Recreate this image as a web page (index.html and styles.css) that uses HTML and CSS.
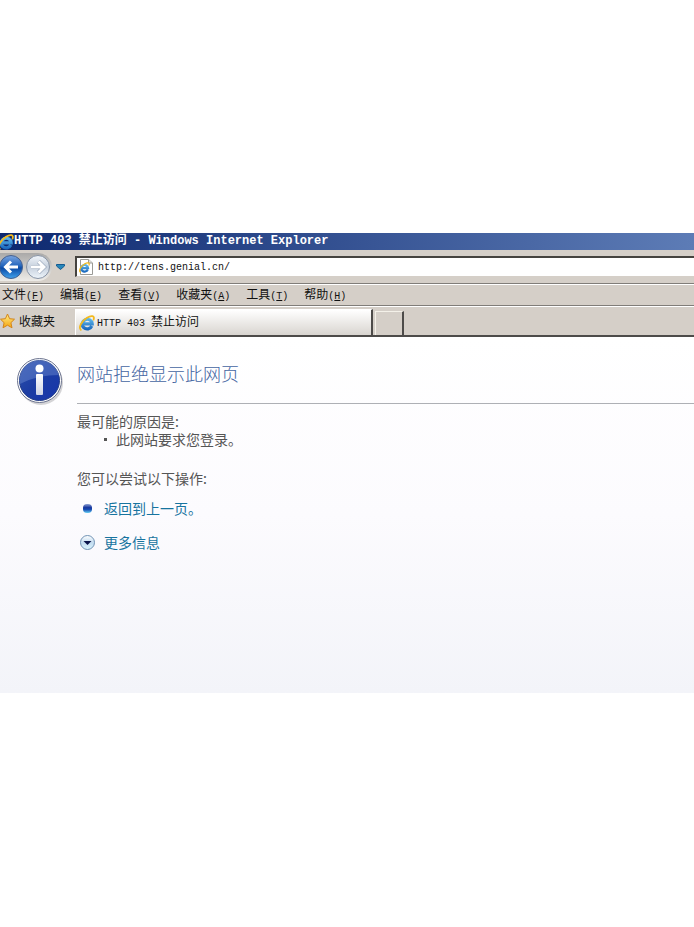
FILE: index.html
```html
<!DOCTYPE html>
<html lang="zh-CN">
<head>
<meta charset="utf-8">
<title>HTTP 403 禁止访问</title>
<link rel="stylesheet" href="styles.css">
</head>
<body>
<svg class="defs" width="0" height="0" aria-hidden="true">
  <defs>
    <linearGradient id="blue" x1="0" y1="0" x2="0" y2="1"><stop offset="0" stop-color="#7ba5e0"/><stop offset=".45" stop-color="#2466bd"/><stop offset=".55" stop-color="#0b4aa5"/><stop offset="1" stop-color="#42a4ee"/></linearGradient>
    <linearGradient id="silver" x1="0" y1="0" x2="0" y2="1"><stop offset="0" stop-color="#f2f6fb"/><stop offset=".5" stop-color="#c6d0dd"/><stop offset="1" stop-color="#eef5fb"/></linearGradient>
    <linearGradient id="info" x1="0" y1="0" x2="1" y2="1"><stop offset="0" stop-color="#2c50ac"/><stop offset=".5" stop-color="#1c3da3"/><stop offset="1" stop-color="#1735ad"/></linearGradient>
    <linearGradient id="stem" x1="0" y1="0" x2="0" y2="1"><stop offset="0" stop-color="#fff"/><stop offset="1" stop-color="#cfd5e6"/></linearGradient>
    <linearGradient id="gold" x1="0" y1="0" x2="0" y2="1"><stop offset="0" stop-color="#ffef8a"/><stop offset="1" stop-color="#f5a40c"/></linearGradient>
    <linearGradient id="cyan" gradientUnits="userSpaceOnUse" x1="0" y1="2" x2="0" y2="15"><stop offset="0" stop-color="#6ac4f2"/><stop offset="1" stop-color="#1765bb"/></linearGradient>
    <linearGradient id="dot" x1="0" y1="0" x2="0" y2="1"><stop offset="0" stop-color="#8d9fd0"/><stop offset=".4" stop-color="#17379f"/><stop offset=".6" stop-color="#1648b0"/><stop offset="1" stop-color="#67d0f4"/></linearGradient>
    <linearGradient id="pale" x1="0" y1="0" x2="0" y2="1"><stop offset="0" stop-color="#fff"/><stop offset=".5" stop-color="#c3dcf0"/><stop offset="1" stop-color="#d9f4fd"/></linearGradient>
    <symbol id="ie" viewBox="0 0 16 16">
      <path d="M12.800 11A5 4.800 0 1 1 13.200 8.800H4.600" fill="none" stroke="url(#cyan)" stroke-width="3.200"/>
      <path d="M1.800 14.800C-.6 12.500 2.400 6.200 8 2.800C12 .4 16 .4 14.600 4.600" fill="none" stroke="#f3b91d" stroke-width="1.800" stroke-linecap="round"/>
    </symbol>
  </defs>
</svg>
<main class="window">
  <header class="titlebar">
    <svg class="title-icon" viewBox="2 0 14 16" aria-hidden="true"><use href="#ie" width="16" height="16"/></svg>
    <h1>HTTP 403 禁止访问 - Windows Internet Explorer</h1>
  </header>

  <div class="navbar">
    <div class="travel">
      <button type="button" aria-label="后退"><svg width="24" height="26" viewBox="0 0 24 26"><circle cx="11" cy="13" r="11.500" fill="url(#blue)" stroke="#46618f"/><path d="M18 13H6M11 7.500L5.500 13L11 18.500" fill="none" stroke="#fff" stroke-width="3"/></svg></button>
      <button type="button" aria-label="前进"><svg width="28" height="26" viewBox="0 0 28 26"><circle cx="14" cy="13" r="11.500" fill="url(#silver)" stroke="#8793a5"/><path d="M7 13H19M14.500 7.500L20 13L14.500 18.500" fill="none" stroke="#8b9bb0" stroke-width="4"/><path d="M7 13H19M14.500 7.500L20 13L14.500 18.500" fill="none" stroke="#fff" stroke-width="3"/></svg></button>
    </div>
    <button type="button" class="recent" aria-label="最近的页面"><svg width="9" height="6" viewBox="0 0 9 6"><path d="M.5.5H8.500V2L4.500 5.500L.5 2Z" fill="#2787ba" stroke="#155b91"/></svg></button>
    <label class="address">
      <svg width="14" height="16" viewBox="0 0 14 16" aria-hidden="true"><path d="M1.500.5H9.500L13.500 4V15.500H1.500Z" fill="#fff" stroke="#9a9a96"/><path d="M9.500.5V4H13.500" fill="#e4e4e0" stroke="#9a9a96"/><use href="#ie" x="0" y="3" width="11" height="11"/></svg>
      <input type="text" aria-label="地址" value="http://tens.genial.cn/">
    </label>
  </div>

  <nav class="menubar" aria-label="菜单">
    <button type="button">文件<span class="latin">(<u>F</u>)</span></button>
    <button type="button">编辑<span class="latin">(<u>E</u>)</span></button>
    <button type="button">查看<span class="latin">(<u>V</u>)</span></button>
    <button type="button">收藏夹<span class="latin">(<u>A</u>)</span></button>
    <button type="button">工具<span class="latin">(<u>T</u>)</span></button>
    <button type="button">帮助<span class="latin">(<u>H</u>)</span></button>
  </nav>

  <div class="tabbar">
    <button type="button" class="favorites"><svg width="15" height="16" viewBox="0 0 15 16" aria-hidden="true"><path d="M7.500 1L9.600 5.700L14.500 6.200L10.900 9.700L12 14.800L7.500 12.200L3 14.800L4.100 9.700L.5 6.200L5.400 5.700Z" fill="url(#gold)" stroke="#d4851a"/></svg>收藏夹</button>
    <button type="button" class="tab"><svg width="16" height="16" viewBox="0 0 16 16" aria-hidden="true"><use href="#ie"/></svg><span><span class="latin">HTTP 403 </span>禁止访问</span></button>
    <button type="button" class="new-tab" aria-label="新选项卡"></button>
  </div>

  <article class="page">
    <svg class="info" width="48" height="49" viewBox="0 0 48 49" aria-hidden="true">
      <circle cx="25" cy="26" r="22" fill="#a9aaae" opacity=".5"/>
      <circle cx="23.500" cy="23.500" r="22" fill="#fff" stroke="#6d7590"/>
      <circle cx="23.500" cy="23.500" r="20" fill="url(#info)" stroke="#243e88"/>
      <path d="M4 27A20 20 0 0 1 43 18C30 18 15 21 4 27Z" fill="#86a3df" opacity=".35"/>
      <circle cx="23.500" cy="11.500" r="4" fill="#fff"/>
      <rect x="20" y="17" width="7" height="21" rx="1" fill="url(#stem)"/>
    </svg>
    <div class="content">
      <h2>网站拒绝显示此网页</h2>
      <section class="reasons">
        <p>最可能的原因是:</p>
        <ul><li>此网站要求您登录。</li></ul>
      </section>
      <p class="try">您可以尝试以下操作:</p>
      <div class="action"><svg width="20" height="16" viewBox="0 0 20 16" aria-hidden="true"><rect x="6" y="4" width="9" height="9" rx="4" fill="url(#dot)"/></svg><a href="#back">返回到上一页。</a></div>
      <div class="action"><svg width="20" height="16" viewBox="0 0 20 16" aria-hidden="true"><circle cx="10.500" cy="8.500" r="7" fill="url(#pale)" stroke="#7193b5"/><path d="M6.500 7H14.500L10.500 11Z" fill="#08144b"/></svg><a href="#more">更多信息</a></div>
    </div>
  </article>
</main>
</body>
</html>
```
FILE: styles.css
```css
* { box-sizing: border-box; }
body {
  margin: 0;
  min-height: 100vh;
  padding-bottom: 1px;
  display: flex;
  flex-direction: column;
  justify-content: center;
  background: #fff;
  color: #111;
  font: 12px/18px "Noto Sans CJK SC", sans-serif;
}
h1, h2, p, ul { margin: 0; padding: 0; }
button {
  padding: 0;
  border: 0;
  background: none;
  color: inherit;
  font: inherit;
  white-space: nowrap;
}
svg { display: block; flex: none; }
.defs { position: absolute; }
.latin { font: 10px/18px "Liberation Mono", monospace; white-space: pre; }
.window { background: #d5cfc8; overflow: hidden; }

.titlebar {
  display: flex;
  align-items: center;
  height: 17px;
  background: linear-gradient(90deg, #0d286f, #5d7cb6);
  color: #fff;
}
.title-icon { width: 14px; height: 16px; }
h1 {
  font: bold 12px/17px "Liberation Mono", "Noto Sans CJK SC", monospace;
  white-space: nowrap;
}

.navbar {
  display: flex;
  align-items: center;
  height: 34px;
  border-bottom: 1px solid #807d79;
}
.travel {
  display: flex;
  height: 28px;
  align-items: center;
  border-radius: 0 14px 14px 0;
  background: linear-gradient(#aaa9a8, #eeece8);
}
.recent { padding: 0 10px 0 4px; }
.address {
  display: flex;
  flex: 1;
  align-items: center;
  gap: 5px;
  height: 21px;
  min-width: 0;
  padding-left: 2px;
  border: solid #45433f;
  border-width: 2px 0 1px 2px;
  border-bottom-color: #d5cfc8;
  background: #fff;
}
.address input {
  flex: 1;
  min-width: 0;
  height: 17px;
  padding: 0;
  border: 0;
  outline: 0;
  background: transparent;
  color: #111;
  font: 10px/17px "Liberation Mono", monospace;
}

.menubar {
  display: flex;
  gap: 16px;
  align-items: center;
  height: 22px;
  padding-left: 2px;
  border-top: 1px solid #fff;
  border-bottom: 1px solid #807d79;
}

.tabbar {
  display: flex;
  align-items: flex-end;
  height: 31px;
  border-top: 1px solid #fff;
  border-bottom: 2px solid #4d4b49;
}
.favorites {
  display: flex;
  align-items: center;
  gap: 4px;
  width: 75px;
  height: 28px;
}
.tab {
  display: flex;
  align-items: center;
  gap: 2px;
  flex: 0 1 298px;
  height: 26px;
  padding-left: 3px;
  border: solid #fff;
  border-width: 1px 2px 0 1px;
  border-right-color: #4d4b49;
  background: linear-gradient(#fff, #d9d5d0);
}
.new-tab {
  width: 29px;
  height: 24px;
  margin-left: 2px;
  border: solid #f4f1e9;
  border-width: 1px 2px 0 1px;
  border-right-color: #4d4b49;
}

.page {
  display: flex;
  gap: 13px;
  min-height: 356px;
  padding: 20px 0 0 16px;
  background: linear-gradient(#fff 0%, #fcfbfe 50%, #f3f4f9 100%);
  color: #555;
  font-size: 14px;
}
.content { flex: 1; min-width: 0; }
h2 {
  height: 47px;
  border-bottom: 1px solid #aeb0b5;
  color: #4465a2;
  font-size: 18px;
  font-weight: 300;
  line-height: 32px;
}
.reasons { padding-top: 8px; }
ul { list-style: none; }
li { display: flex; padding-left: 26px; }
li::before {
  content: "";
  width: 3px;
  height: 3px;
  margin: 8px 9px 0 1px;
  background: #555;
}
.try { padding-top: 21px; }
.action {
  display: flex;
  align-items: center;
  gap: 7px;
  padding-top: 12px;
}
.action + .action { padding-top: 16px; }
a { color: #17749f; text-decoration: none; }
```
